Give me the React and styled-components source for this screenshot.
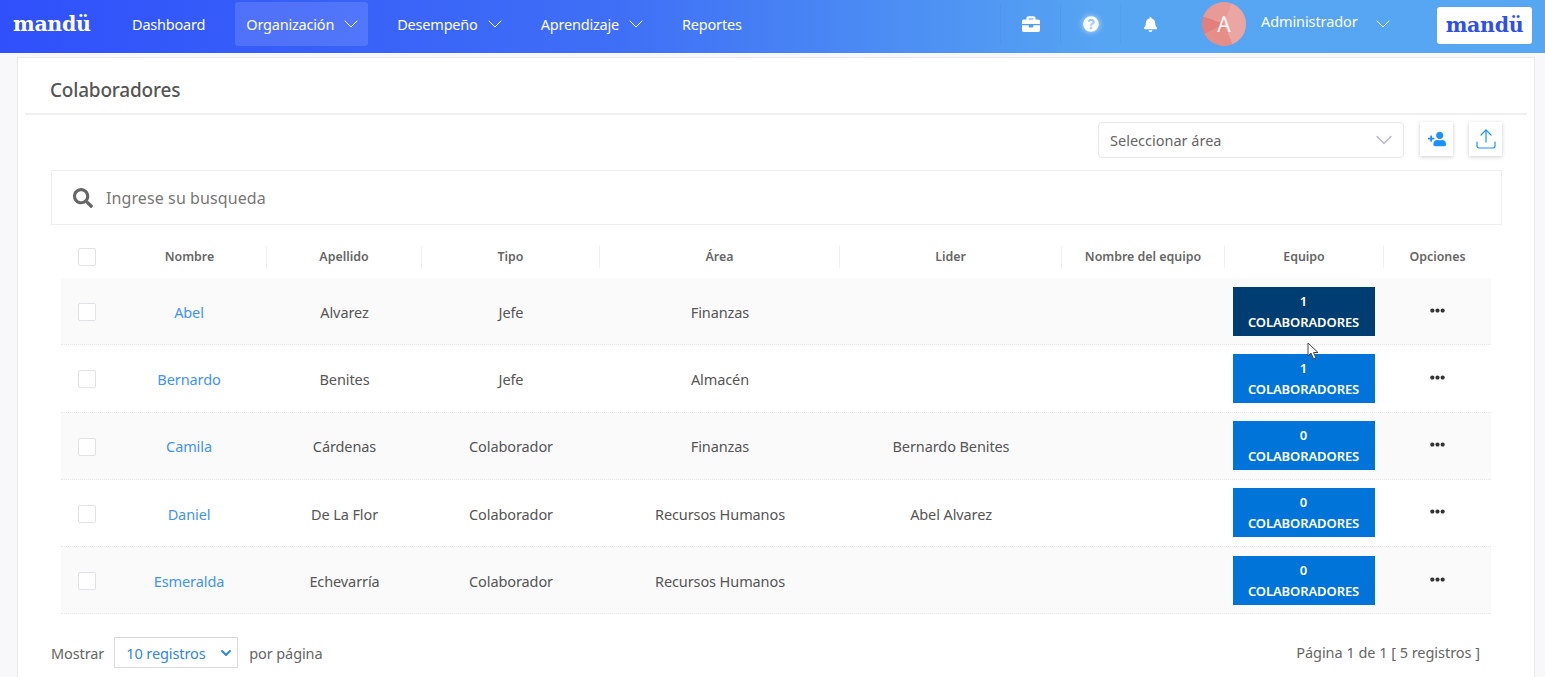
import React from 'react';
import styled, { createGlobalStyle } from 'styled-components';
import { FaBriefcase, FaQuestionCircle, FaBell, FaSearch, FaUserPlus, FaEllipsisH } from 'react-icons/fa';
import { ChevronDown, Upload } from 'lucide-react';

const Global = createGlobalStyle`
  html, body { margin: 0; padding: 0; height: 677px; overflow: hidden; background: #f8f8fb; }
  * { box-sizing: border-box; }
  body { font-family: "Noto Sans", "Open Sans", sans-serif; color: #555; }
`;
const Page = styled.div`position: relative; width: 1545px; height: 677px; overflow: hidden;`;
const Nav = styled.header`
  height: 53px; display: flex; align-items: center; color: #fff;
  background: linear-gradient(90deg, #2f50fb 0%, #3f6ff6 40%, #56a5f2 72%, #57a6f2 100%);
`;
const Logo = styled.div`
  font-family: "DejaVu Serif", "Liberation Serif", serif; font-weight: 700; font-size: 20.5px; line-height: 1; letter-spacing: -.3px;
  color: ${p => p.$color || '#fff'};
`;
const Brand = styled.div`width: 120px; padding-left: 13px; margin-top: -4px;`;
const Menu = styled.nav`display: flex; align-items: center; height: 44px; margin-top: -5px;`;
const MenuItem = styled.div`
  height: 44px; display: flex; align-items: center; gap: 5px; padding: 0 ${p => p.$plain ? 11 : 5}px 0 ${p => p.$active ? 11 : 12}px; border-radius: 3px;
  font-size: 14.5px; letter-spacing: -.2px; margin-right: ${p => p.$gap}px;
  background: ${p => p.$active ? 'rgba(255,255,255,.13)' : 'transparent'};
`;
const Right = styled.div`margin-left: auto; display: flex; align-items: center; height: 48px; margin-top: -5px;`;
const IconCell = styled.div`
  width: 60px; height: 38px; display: flex; align-items: center; justify-content: center;
  border-left: 1px solid rgba(40,90,170,.08); font-size: ${p => p.$size}px;
`;
const Glow = styled(IconCell)`svg { filter: drop-shadow(0 0 3px rgba(255,255,255,.8)); }`;
const Avatar = styled.div`
  width: 44px; height: 44px; border-radius: 50%; margin-left: 22px; display: flex; align-items: center; justify-content: center;
  font-size: 21px; color: rgba(255,255,255,.92);
  background: conic-gradient(from 20deg, #eba6a4 0 38%, #e58d88 38% 62%, #e17f7c 62% 75%, #e89a97 75% 100%);
`;
const UserName = styled.div`margin-left: 15px; width: 110px; font-size: 14.5px; letter-spacing: -.1px; margin-top: -7px;`;
const Chevron = styled(ChevronDown)`flex: none; stroke-width: 1;`;
const LogoBox = styled.div`
  width: 95px; height: 37px; margin: 2px 13px 0 42px; background: #fff; border-radius: 3px;
  display: flex; align-items: center; justify-content: center;
`;
const Card = styled.main`
  margin: 4px 10px 0 17px; height: 640px; background: #fff; border: 1px solid #e9e9ef; border-bottom: 0;
  padding: 0 7px;
`;
const Title = styled.h1`
  margin: 0; height: 57px; padding: 20px 0 0 25px; font-size: 19px; line-height: 24px; font-weight: 500; color: #555;
  letter-spacing: -.2px; border-bottom: 2px solid #f0f0f3;
`;
const Tools = styled.div`display: flex; justify-content: flex-end; padding: 7px 25px 0 0; height: 55px; gap: 16px;`;
const AreaSelect = styled.div`
  width: 306px; height: 36px; border: 1px solid #e8e8ee; border-radius: 4px; display: flex; align-items: center;
  justify-content: space-between; padding: 0 5px 0 11px; font-size: 14.5px; color: #666;
`;
const Square = styled.div`
  width: 33px; height: 34px; background: #fff; display: flex; align-items: center; justify-content: center;
  color: #1e90ff; box-shadow: 0 1px 4px rgba(0,0,0,.2);
`;
const MirroredUser = styled(FaUserPlus)`transform: scaleX(-1);`;
const Search = styled.div`
  margin: 0 25px 0 26px; height: 55px; border: 1px solid #eeeef2; display: flex; align-items: center; gap: 13px; padding-left: 21px;
  font-size: 16px; letter-spacing: .1px; color: #777; svg { color: #666; font-size: 20px; }
`;
const Table = styled.div`margin: 10px 36px 0 36px;`;
const cols = '52px 154px 155px 178px 240px 222px 163px 159px 107px';
const Head = styled.div`display: grid; grid-template-columns: ${cols}; height: 43px; align-items: center;`;
const HeadCell = styled.div`
  height: 22px; display: flex; align-items: center; justify-content: center; font-size: 12.4px; font-weight: 600; color: #666;
  border-right: ${p => p.$last ? 0 : '1px solid #f0f0f3'};
`;
const Row = styled.div`
  display: grid; grid-template-columns: ${cols}; height: 67.25px; align-items: center; font-size: 14.5px; color: #555;
  letter-spacing: -.1px; background: ${p => p.$odd ? '#fafafb' : '#fff'}; border-bottom: 1px dotted #e8e8ec;
`;
const Cell = styled.div`text-align: center; margin-top: 1.5px;`;
const NameLink = styled(Cell)`color: #3f93f5; padding-right: 2px;`;
const CheckCell = styled.div`display: flex; justify-content: center; margin-left: -1px; margin-top: ${p => p.$row ? 2 : 0}px;`;
const Check = styled.div`width: 18px; height: 18px; border: 1px solid #e2e2e6; border-radius: 2px; background: #fff;`;
const TeamCell = styled.div`display: flex; justify-content: center; padding-right: 2px;`;
const TeamButton = styled.div`
  width: 142px; height: 49px; background: ${p => p.$dark ? '#003d73' : '#0074d9'}; color: #fff;
  font-size: 13px; font-weight: 600; line-height: 21px; padding-top: 4px; text-align: center;
`;
const Dots = styled.div`color: #333; font-size: 15px; display: flex; justify-content: center; margin-top: -2px;`;
const Footer = styled.div`
  display: flex; align-items: center; justify-content: space-between; margin: 23px 0 0 26px; padding-right: 47px; height: 31px;
  font-size: 14.5px; color: #666;
`;
const Pager = styled.div`display: flex; align-items: center; gap: 10px; letter-spacing: -.1px;`;
const PerPage = styled.span`margin-left: 1px;`;
const PageCount = styled.div`margin-top: -2px; letter-spacing: -.03px;`;
const PageSize = styled.div`
  width: 124px; height: 31px; border: 1px solid #d8d8de; display: flex; align-items: center; justify-content: space-between;
  padding: 0 3px 0 11px; color: #2f86e6; svg { stroke-width: 3; }
`;
const Pointer = styled.svg`position: absolute; left: 1307px; top: 342px;`;

const rows = [
  ['Abel', 'Alvarez', 'Jefe', 'Finanzas', '', 1],
  ['Bernardo', 'Benites', 'Jefe', 'Almacén', '', 1],
  ['Camila', 'Cárdenas', 'Colaborador', 'Finanzas', 'Bernardo Benites', 0],
  ['Daniel', 'De La Flor', 'Colaborador', 'Recursos Humanos', 'Abel Alvarez', 0],
  ['Esmeralda', 'Echevarría', 'Colaborador', 'Recursos Humanos', '', 0],
];
const heads = ['Nombre', 'Apellido', 'Tipo', 'Área', 'Lider', 'Nombre del equipo', 'Equipo', 'Opciones'];

export default function App() {
  return (
    <Page>
      <Global />
      <Nav>
        <Brand><Logo>mandü</Logo></Brand>
        <Menu>
          <MenuItem $plain $gap={19}>Dashboard</MenuItem>
          <MenuItem $active $gap={17}>Organización <Chevron size={24} /></MenuItem>
          <MenuItem $gap={17}>Desempeño <Chevron size={24} /></MenuItem>
          <MenuItem $gap={17}>Aprendizaje <Chevron size={24} /></MenuItem>
          <MenuItem $plain>Reportes</MenuItem>
        </Menu>
        <Right>
          <IconCell $size={18}><FaBriefcase /></IconCell>
          <Glow $size={16}><FaQuestionCircle /></Glow>
          <IconCell $size={15}><FaBell /></IconCell>
          <Avatar>A</Avatar>
          <UserName>Administrador</UserName>
          <Chevron size={24} />
          <LogoBox><Logo $color="#2f50e8">mandü</Logo></LogoBox>
        </Right>
      </Nav>
      <Card>
        <Title>Colaboradores</Title>
        <Tools>
          <AreaSelect>Seleccionar área <ChevronDown size={28} color="#b4b4c4" strokeWidth={1.2} /></AreaSelect>
          <Square><MirroredUser size={18} /></Square>
          <Square><Upload size={24} strokeWidth={1.2} /></Square>
        </Tools>
        <Search><FaSearch /> Ingrese su busqueda</Search>
        <Table>
          <Head>
            <CheckCell><Check /></CheckCell>
            {heads.map((h, i) => <HeadCell key={h} $last={i === heads.length - 1}>{h}</HeadCell>)}
          </Head>
          {rows.map((r, i) => (
            <Row key={r[0]} $odd={i % 2 === 0}>
              <CheckCell $row><Check /></CheckCell>
              <NameLink>{r[0]}</NameLink>
              <Cell>{r[1]}</Cell>
              <Cell>{r[2]}</Cell>
              <Cell>{r[3]}</Cell>
              <Cell>{r[4]}</Cell>
              <Cell />
              <TeamCell><TeamButton $dark={i === 0}>{r[5]}<br />COLABORADORES</TeamButton></TeamCell>
              <Dots><FaEllipsisH /></Dots>
            </Row>
          ))}
        </Table>
        <Footer>
          <Pager>
            Mostrar
            <PageSize>10 registros <ChevronDown size={16} /></PageSize>
            <PerPage>por página</PerPage>
          </Pager>
          <PageCount>Página 1 de 1 [ 5 registros ]</PageCount>
        </Footer>
      </Card>
      <Pointer width="13" height="19" viewBox="0 0 13 19">
        <path d="M1 1 L1 14 L4 11 L6.5 17 L9 16 L6.5 10.5 L11 10.5 Z" fill="#fff" stroke="#444" strokeWidth="1" />
      </Pointer>
    </Page>
  );
}
